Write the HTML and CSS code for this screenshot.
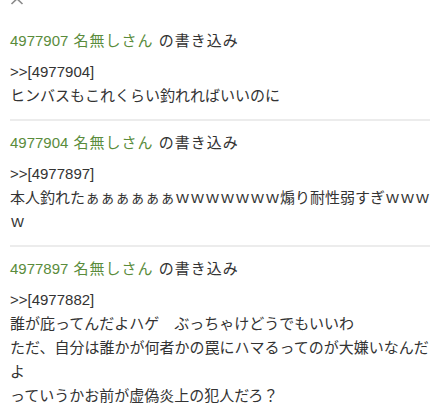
FILE: index.html
```html
<!DOCTYPE html>
<html lang="ja">
<head>
<meta charset="utf-8">
<link rel="stylesheet" href="styles.css">
</head>
<body>
<div class="page">
  <div class="top">
    <svg class="chev" width="14" height="7" viewBox="0 0 14 7"><polyline points="1.5,6 7,0.8 12.5,6" fill="none" stroke="#8a8a8a" stroke-width="1.6"/></svg>
  </div>
  <div class="post">
    <div class="head"><span class="num">4977907</span> <span class="name">名無しさん</span> <span class="tail">の書き込み</span></div>
    <div class="body">&gt;&gt;[4977904]<br>ヒンバスもこれくらい釣れればいいのに</div>
  </div>
  <div class="post">
    <div class="head"><span class="num">4977904</span> <span class="name">名無しさん</span> <span class="tail">の書き込み</span></div>
    <div class="body">&gt;&gt;[4977897]<br>本人釣れたぁぁぁぁぁぁｗｗｗｗｗｗｗ煽り耐性弱すぎｗｗｗｗ</div>
  </div>
  <div class="post">
    <div class="head"><span class="num">4977897</span> <span class="name">名無しさん</span> <span class="tail">の書き込み</span></div>
    <div class="body">&gt;&gt;[4977882]<br>誰が庇ってんだよハゲ　ぶっちゃけどうでもいいわ<br>ただ、自分は誰かが何者かの罠にハマるってのが大嫌いなんだよ<br>っていうかお前が虚偽炎上の犯人だろ？</div>
  </div>
</div>
</body>
</html>
```
FILE: styles.css
```css
html, body {
  margin: 0;
  padding: 0;
  background: #ffffff;
}
body {
  font-family: "Liberation Sans", "Noto Sans CJK JP", sans-serif;
  font-size: 15px;
  line-height: 24px;
  color: #333333;
}
.page {
  width: 420px;
  padding: 0 10px;
}
.top {
  height: 19px;
  display: flex;
  align-items: flex-start;
}
.chev {
  display: block;
  margin-top: -2px;
}
.post {
  padding: 10px 0 11px;
  border-bottom: 2px solid #ececec;
}
.post:last-child {
  border-bottom: none;
}
.head {
  margin-bottom: 7px;
  white-space: nowrap;
  word-spacing: 1px;
}
.name, .tail {
  letter-spacing: 1px;
}
.num, .name {
  color: #5a8c3c;
}
.body {
  word-break: break-all;
}
```
